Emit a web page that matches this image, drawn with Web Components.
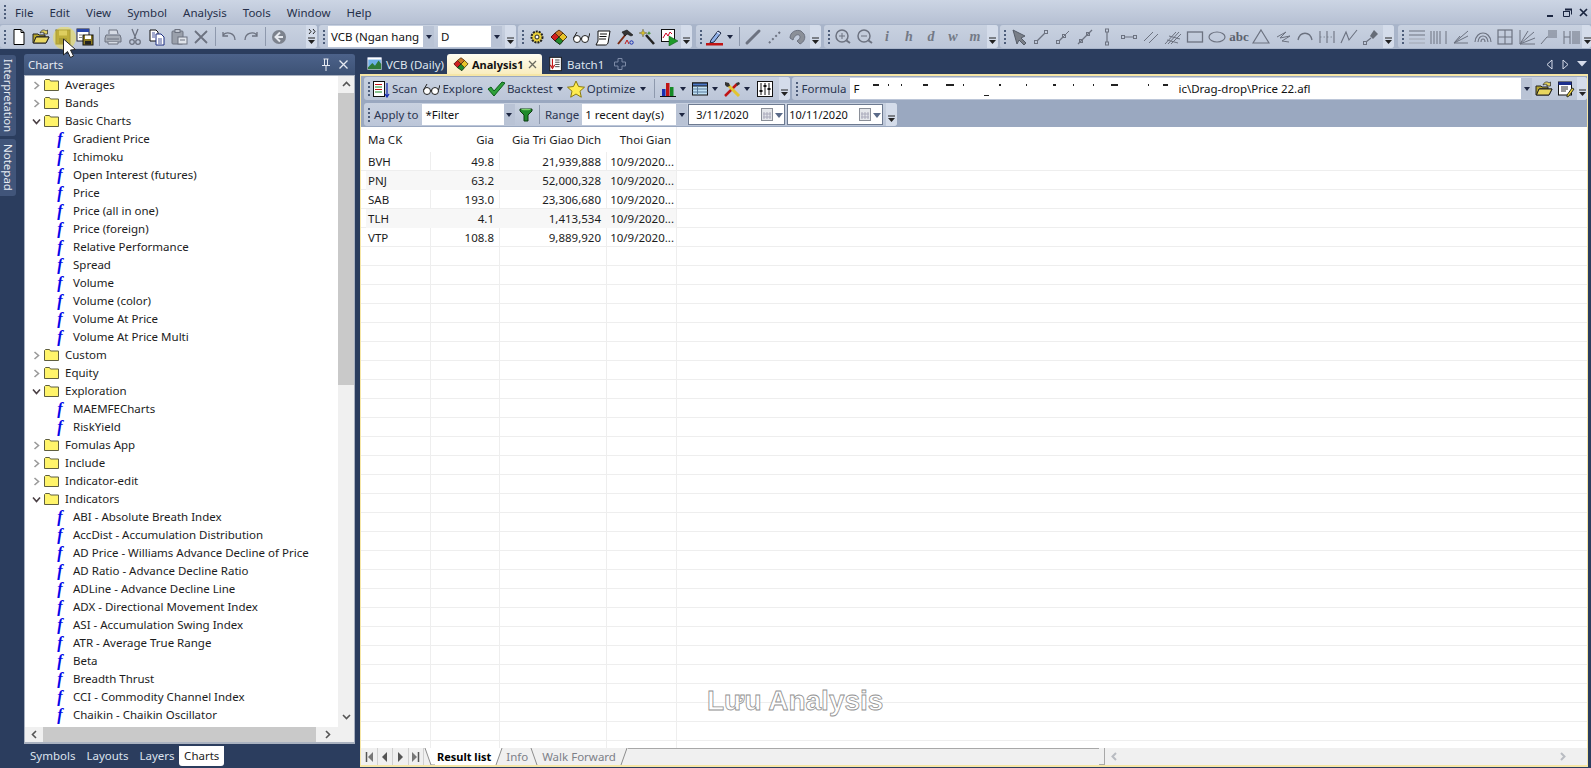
<!doctype html>
<html><head><meta charset="utf-8"><title>AmiBroker</title>
<style>
html,body{margin:0;padding:0;width:1591px;height:768px;overflow:hidden;background:#2b3d5e}
body{font:11.5px "Noto Sans","Open Sans",sans-serif;color:#1c1c1c;position:relative}
</style></head><body>
<am-app>
  <am-menubar>
    <am-menu>File</am-menu><am-menu>Edit</am-menu><am-menu>View</am-menu><am-menu>Symbol</am-menu><am-menu>Analysis</am-menu><am-menu>Tools</am-menu><am-menu>Window</am-menu><am-menu>Help</am-menu>
  </am-menubar>
  <am-toolrow>
    <am-toolbar more style="width:317px">
      <am-btn icon="new"></am-btn><am-btn icon="open"></am-btn><am-btn icon="save"></am-btn><am-btn icon="saveall"></am-btn><am-sep></am-sep>
      <am-btn icon="print"></am-btn><am-btn icon="cut"></am-btn><am-btn icon="copy"></am-btn><am-btn icon="paste"></am-btn><am-btn icon="del"></am-btn><am-sep></am-sep>
      <am-btn icon="undo"></am-btn><am-btn icon="redo"></am-btn><am-sep></am-sep><am-btn icon="back"></am-btn>
    </am-toolbar>
    <am-toolbar style="width:197px">
      <am-combo style="width:106px;margin-left:1px">VCB (Ngan hang</am-combo><am-combo style="width:64px;margin-left:4px">D</am-combo>
    </am-toolbar>
    <am-toolbar style="width:174px">
      <am-btn icon="gear"></am-btn><am-btn icon="gems"></am-btn><am-btn icon="glasses"></am-btn><am-btn icon="script"></am-btn><am-btn icon="hammer"></am-btn><am-btn icon="wand"></am-btn><am-btn icon="play"></am-btn>
    </am-toolbar>
    <am-toolbar style="width:125px;margin-left:2px">
      <am-btn icon="pen" arrow></am-btn><am-sep></am-sep><am-btn icon="line"></am-btn><am-btn icon="dots"></am-btn><am-btn icon="magnet"></am-btn>
    </am-toolbar>
    <am-toolbar style="width:174px;margin-left:1px">
      <am-btn icon="zin"></am-btn><am-btn icon="zout"></am-btn><am-btn letter>i</am-btn><am-btn letter>h</am-btn><am-btn letter>d</am-btn><am-btn letter>w</am-btn><am-btn letter>m</am-btn>
    </am-toolbar>
    <am-toolbar style="width:394px">
      <am-btn icon="arrowtool"></am-btn><am-btn icon="seg"></am-btn><am-btn icon="ray"></am-btn><am-btn icon="xline"></am-btn><am-btn icon="vert"></am-btn><am-btn icon="horiz"></am-btn><am-btn icon="par"></am-btn><am-btn icon="andrews"></am-btn><am-btn icon="rect"></am-btn><am-btn icon="oval"></am-btn><am-btn abc>abc</am-btn><am-btn icon="tri"></am-btn><am-btn icon="zig"></am-btn><am-btn icon="arc"></am-btn><am-btn icon="cycles"></am-btn><am-btn icon="poly"></am-btn><am-btn icon="pin"></am-btn>
    </am-toolbar>
    <am-toolbar style="width:193px;margin-left:2px">
      <am-btn icon="fibh"></am-btn><am-btn icon="fibt"></am-btn><am-btn icon="fan"></am-btn><am-btn icon="fibarc"></am-btn><am-btn icon="gannsq"></am-btn><am-btn icon="gannfan"></am-btn><am-btn icon="gannlv"></am-btn><am-btn icon="cyc2"></am-btn>
    </am-toolbar>
  </am-toolrow>
  <am-workspace>
    <am-sidetabs><am-vtab style="height:81px;font-size:11px">Interpretation</am-vtab><am-vtab style="height:57px">Notepad</am-vtab></am-sidetabs>
    <am-dock title="Charts">
      <am-tree>
        <am-node kind="closed">Averages</am-node><am-node kind="closed">Bands</am-node><am-node kind="open">Basic Charts</am-node>
        <am-node>Gradient Price</am-node><am-node>Ichimoku</am-node><am-node>Open Interest (futures)</am-node><am-node>Price</am-node><am-node>Price (all in one)</am-node><am-node>Price (foreign)</am-node><am-node>Relative Performance</am-node><am-node>Spread</am-node><am-node>Volume</am-node><am-node>Volume (color)</am-node><am-node>Volume At Price</am-node><am-node>Volume At Price Multi</am-node>
        <am-node kind="closed">Custom</am-node><am-node kind="closed">Equity</am-node><am-node kind="open">Exploration</am-node>
        <am-node>MAEMFECharts</am-node><am-node>RiskYield</am-node>
        <am-node kind="closed">Fomulas App</am-node><am-node kind="closed">Include</am-node><am-node kind="closed">Indicator-edit</am-node><am-node kind="open">Indicators</am-node>
        <am-node>ABI - Absolute Breath Index</am-node><am-node>AccDist - Accumulation Distribution</am-node><am-node>AD Price - Williams Advance Decline of Price</am-node><am-node>AD Ratio - Advance Decline Ratio</am-node><am-node>ADLine - Advance Decline Line</am-node><am-node>ADX - Directional Movement Index</am-node><am-node>ASI - Accumulation Swing Index</am-node><am-node>ATR - Average True Range</am-node><am-node>Beta</am-node><am-node>Breadth Thrust</am-node><am-node>CCI - Commodity Channel Index</am-node><am-node>Chaikin - Chaikin Oscillator</am-node>
      </am-tree>
      <am-docktab slot="tabs">Symbols</am-docktab><am-docktab slot="tabs">Layouts</am-docktab><am-docktab slot="tabs">Layers</am-docktab><am-docktab slot="tabs" active>Charts</am-docktab>
    </am-dock>
    <am-doc>
      <am-doctab slot="tabs" icon="chartthumb" style="width:84px">VCB (Daily)</am-doctab>
      <am-doctab slot="tabs" icon="gems" active close style="width:95px">Analysis1</am-doctab>
      <am-doctab slot="tabs" icon="batch" style="width:66px">Batch1</am-doctab>
      <am-toolrow2 slot="bars">
        <am-toolbar style="width:425.5px">
          <am-btn icon="scanlist" auto>Scan</am-btn><am-btn icon="glasses" auto style="margin-left:5px">Explore</am-btn><am-btn icon="check" auto arrow style="margin-left:4px">Backtest</am-btn><am-btn icon="star" auto arrow style="margin-left:4px">Optimize</am-btn><am-sep style="margin-left:8px"></am-sep>
          <am-btn icon="bars" arrow></am-btn><am-btn icon="table" arrow></am-btn><am-btn icon="tools" arrow></am-btn><am-btn icon="mixer" style="margin-left:1px"></am-btn>
        </am-toolbar>
        <am-toolbar style="flex:1;margin-left:2px">
          <am-text>Formula</am-text>
          <am-combo style="width:682px;margin-left:2px"><span style="display:inline-flex;align-items:center">F<svg width="319" height="20"><g fill="#222"><rect x="14" y="5" width="6" height="2"/><rect x="29" y="5" width="1" height="2"/><rect x="42" y="5" width="1" height="2"/><rect x="64" y="5" width="5" height="2"/><rect x="87" y="5" width="8" height="2"/><rect x="104" y="5" width="1" height="2"/><rect x="125" y="16" width="5" height="1"/><rect x="140" y="5" width="2" height="2"/><rect x="167" y="5" width="1" height="2"/><rect x="194" y="5" width="3" height="2"/><rect x="214" y="5" width="1" height="2"/><rect x="234" y="5" width="1" height="2"/><rect x="252" y="5" width="7" height="2"/><rect x="289" y="5" width="1" height="2"/><rect x="304" y="5" width="5" height="2"/></g></svg>ic\Drag-drop\Price 22.afl</span></am-combo>
          <am-btn icon="open" style="margin-left:1px"></am-btn><am-btn icon="editor"></am-btn>
        </am-toolbar>
      </am-toolrow2>
      <am-toolrow2 slot="bars" style="margin-top:1px">
        <am-toolbar style="width:533px">
          <am-text>Apply to</am-text>
          <am-combo style="width:92.5px;margin-left:2px">*Filter</am-combo>
          <am-btn icon="funnel"></am-btn><am-sep></am-sep>
          <am-text>Range</am-text>
          <am-combo style="width:105px;margin-left:1px">1 recent day(s)</am-combo>
          <am-date style="width:97px;margin-left:1px">3/11/2020</am-date>
          <am-date style="width:96px;margin-left:2px" tight>10/11/2020</am-date>
        </am-toolbar>
      </am-toolrow2>
      <am-grid slot="grid">
        <am-row head><am-cell>Ma CK</am-cell><am-cell right>Gia</am-cell><am-cell right>Gia Tri Giao Dich</am-cell><am-cell right>Thoi Gian</am-cell></am-row>
        <am-row><am-cell>BVH</am-cell><am-cell right>49.8</am-cell><am-cell right>21,939,888</am-cell><am-cell right date>10/9/2020...</am-cell></am-row>
        <am-row alt><am-cell>PNJ</am-cell><am-cell right>63.2</am-cell><am-cell right>52,000,328</am-cell><am-cell right date>10/9/2020...</am-cell></am-row>
        <am-row><am-cell>SAB</am-cell><am-cell right>193.0</am-cell><am-cell right>23,306,680</am-cell><am-cell right date>10/9/2020...</am-cell></am-row>
        <am-row alt><am-cell>TLH</am-cell><am-cell right>4.1</am-cell><am-cell right>1,413,534</am-cell><am-cell right date>10/9/2020...</am-cell></am-row>
        <am-row><am-cell>VTP</am-cell><am-cell right>108.8</am-cell><am-cell right>9,889,920</am-cell><am-cell right date>10/9/2020...</am-cell></am-row>
        <am-watermark slot="over">Lưu Analysis</am-watermark>
      </am-grid>
      <am-sheets slot="sheets"></am-sheets>
    </am-doc>
  </am-workspace>
  <am-pointer></am-pointer>
</am-app>
<script>
const G='#6c7280',B='#000';
const s=(d,c=G,w=1.2)=>`<path d="${d}" fill="none" stroke="${c}" stroke-width="${w}"/>`;
const box=(x,y)=>`<rect x="${x-1.5}" y="${y-1.5}" width="3" height="3" fill="none" stroke="${G}"/>`;
const ICONS={
new:`<path d="M4 1.500h7l3 3v12H4z" fill="#fff" stroke="#000"/><path d="M11 1.500v3h3" fill="none" stroke="#000"/>`,
open:`<path d="M1 15V6h5l1 1h6v2H5L2 15l2-6h13l-3 6z" fill="#b5a52c" stroke="#222"/><path d="M1.500 15 4 9h13l-3 6z" fill="#e8d660" stroke="#222"/><path d="M8 5C9 2 12 1 14 3l1.500-1v4h-4l1-1C12 4 10 4 8 5z" fill="#e8d660" stroke="#222" stroke-width=".7"/>`,
save:`<rect x="2" y="2" width="14" height="14" fill="#85741f" stroke="#5a4f18"/><rect x="5" y="2.500" width="8" height="5" fill="#c9bb72"/><rect x="5" y="10" width="8" height="5.500" fill="#5a4f18"/>`,
saveall:`<rect x="1" y="1" width="12" height="12" fill="#fff" stroke="#223"/><rect x="1" y="1" width="12" height="3" fill="#2a46a8"/><path d="M3 7h3M3 9.500h3" stroke="#888"/><rect x="7" y="7" width="10" height="10" fill="#8c7a20" stroke="#111"/><rect x="9" y="7.500" width="6" height="3.500" fill="#fff"/><rect x="9" y="13" width="6" height="3.500" fill="#222"/>`,
print:`<path d="M5 6V2h8l1 4" fill="#d6dbe4" stroke="${G}"/><path d="M2 7h14l1 3v4H1v-4z" fill="#a8aeb8" stroke="${G}"/><path d="M3 11h12M4 14v2h10v-2" stroke="${G}" fill="#d6dbe4"/>`,
cut:s('M6 1l4 10M12 1L8 11',G,1.3)+`<circle cx="6" cy="14" r="2.300" fill="none" stroke="${G}" stroke-width="1.300"/><circle cx="12" cy="14" r="2.300" fill="none" stroke="${G}" stroke-width="1.300"/>`,
copy:`<path d="M2 2h6l2 2v9H2z" fill="#fff" stroke="#111"/><path d="M8 6h5l3 3v8H8z" fill="#fff" stroke="#1b2c80"/><path d="M4 5h3M4 7h3M4 9h3M10 11h4M10 13h4M10 15h4" stroke="#1b2c80" stroke-width=".8"/>`,
paste:`<rect x="2" y="3" width="11" height="13" rx="1" fill="#9aa0ab" stroke="${G}"/><rect x="5" y="1.500" width="5" height="3" fill="#c3c8d2" stroke="${G}"/><rect x="8" y="9" width="9" height="7" fill="#dfe3ea" stroke="${G}"/><path d="M10 12h5" stroke="${G}"/>`,
del:s('M3 3l12 12M15 3L3 15',G,1.800),
undo:s('M3 7c4-4 12-2 12 5M3 4v4h5',G,1.300),
redo:s('M15 7c-4-4-12-2-12 5M15 4v4h-5',G,1.300),
back:`<circle cx="9" cy="9" r="7" fill="#7c828d"/><path d="M10 4.500 5.500 9l4.500 4.500M6 9h7" fill="none" stroke="#e6e9ef" stroke-width="2"/>`,
gear:`<circle cx="9" cy="9" r="5.500" fill="#e8cf3c" stroke="#222" stroke-dasharray="2 1" stroke-width="2"/><circle cx="9" cy="9" r="2" fill="#fff" stroke="#222"/>`,
gems:`<path d="M1 9l4-4 4 4-4 4z" fill="#cf1f1f" stroke="#511"/><path d="M5 13l4-4 4 4-3 3.500z" fill="#22882c" stroke="#131"/><path d="M9 9l4-4 4 4-4 4z" fill="#e8c52a" stroke="#541"/><path d="M5 5l4-3 4 3-4 4z" fill="#d07a24" stroke="#531"/>`,
glasses:`<circle cx="5" cy="11" r="3.500" fill="#fff" stroke="#222"/><circle cx="13" cy="11" r="3.500" fill="#fff" stroke="#222"/><path d="M8.500 10.500c1-.8 1.500-.8 1 0M1.500 10 5 4M16.500 10 18 5" stroke="#222" fill="none"/>`,
script:`<path d="M4 3h12l-2 12c-1 2-2 2-3 2H2l2-4z" fill="#fff" stroke="#111"/><path d="M6 6h7M5.500 8.500h7M5 11h7" stroke="#111"/>`,
hammer:`<path d="M2 16 10 6" stroke="#7a2a12" stroke-width="2"/><path d="M6 4l5-2 6 5-2 1-4-2-2 2z" fill="#333" stroke="#111" stroke-width=".6"/><path d="M9 16l2-4 2 4" fill="none" stroke="#c01818"/><circle cx="15.500" cy="14.500" r="1.700" fill="none" stroke="#1a2fb0"/>`,
wand:`<path d="M8 7 16 16" stroke="#222" stroke-width="2.500"/><path d="M5 1l1 3 3 1-3 1-1 3-1-3-3-1 3-1z" fill="#d6be2a" stroke="#665" stroke-width=".5"/><path d="M11 3l.6 1.600 1.600.6-1.600.6-.6 1.600-.6-1.600-1.600-.6 1.600-.6z" fill="#3a8a2a"/>`,
play:`<rect x="1.500" y="1.500" width="13" height="12" fill="#fff" stroke="#111"/><path d="M3 10l3-5 2 3 2-4 2 2" stroke="#c02" fill="none"/><path d="M9 8l9 5-9 5z" fill="#1f9a2a" stroke="#0a5012" stroke-width=".5"/>`,
pen:`<path d="M5 12 12 3l3 2-7 9-4 1z" fill="#8fb0e8" stroke="#1a2540"/><path d="M11 4l3 2" stroke="#eef"/><rect x="0" y="15" width="17" height="2.500" fill="#c01414"/>`,
line:`<path d="M3 15 15 3" stroke="${G}" stroke-width="3" stroke-linecap="round"/>`,
dots:`<path d="M3 15 15 3" stroke="${G}" stroke-width="2" stroke-dasharray="2 2.500"/>`,
magnet:`<path d="M2 10C2 4 8 1 13 3l3 3c2 4 0 8-4 10l-3-3c3-2 4-4 2-6-2-1-5 1-6 5z" fill="#8a8f98" stroke="${G}"/>`,
zin:`<circle cx="8" cy="8" r="6" fill="#c3ccdb" stroke="${G}" stroke-width="1.500"/><path d="M5 8h6M8 5v6" stroke="${G}"/><path d="M12.500 12.500 16 15" stroke="${G}" stroke-width="2"/>`,
zout:`<circle cx="8" cy="8" r="6" fill="#c3ccdb" stroke="${G}" stroke-width="1.500"/><path d="M5 8h6" stroke="${G}"/><path d="M12.500 12.500 16 15" stroke="${G}" stroke-width="2"/>`,
arrowtool:`<path d="M3 2l12 6-4 2 5 5-2 2-5-5-2 4z" fill="#7a7f88" stroke="#555c68"/>`,
seg:s('M5 13 13 5')+box(4,14)+box(14,4),
ray:s('M5 13 9 9')+s('M9 9l6-6',G,1)+box(4,14)+box(10,8),
xline:s('M2 16 16 2')+box(5,13)+box(12,6),
vert:s('M9 4v10')+box(9,2.500)+box(9,15.500),
horiz:s('M5 9h8')+box(3,9)+box(15,9),
par:s('M2 13 11 4M7 15 16 6',G,1),
andrews:s('M1 16 12 4M4 16 15 4M7 16 17 6M5 8l11 3M3 12l11 3',G,1),
rect:`<rect x="1.500" y="4" width="15" height="10" fill="none" stroke="${G}" stroke-width="1.300"/>`,
oval:`<ellipse cx="9" cy="9" rx="8" ry="5" fill="none" stroke="${G}" stroke-width="1.200"/>`,
tri:s('M9 2 17 15H1z',G,1.200),
zig:s('M3 9l9-5-6 6 10-2-8 5 7 1',G,1),
arc:s('M2 12C4 3 14 3 16 12',G,1.300),
cycles:s('M2 3v12M9 3v12M16 3v12',G,1.100)+s('M2 9h14',G,.7).replace('/>',' stroke-dasharray="1.500 2"/>'),
poly:s('M1 15 6 4l3 8 8-10',G,1.100),
pin:`<path d="M12 2l4 4-5 5-3-3z" fill="#666c77"/>`+s('M9 10 4 14')+box(3,15),
fibh:s('M1 3h16M1 7h16',G,1)+`<path d="M1 11h16M1 15h16" stroke="#a0a6b2"/>`,
fibt:s('M1 3v13M4 3v13M7 3v13M10 3v13M16 3v13',G,1),
fan:s('M2 15 16 3M2 15 16 8M2 15h14',G,1)+s('M2 15 8 8',G,1),
fibarc:s('M1 14C2 2 16 2 17 14M4 14C5 6 13 6 14 14M7 14C7 10 11 10 11 14',G,1.100),
gannsq:`<rect x="2" y="2" width="14" height="14" fill="none" stroke="${G}" stroke-width="1.200"/>`+s('M9 2v14M2 9h14',G,1.100),
gannfan:s('M2 2v14h15M2 16 16 4M2 16 10 3M2 16 17 10',G,1),
gannlv:s('M1 16 7 9M7 9h10M8 7h9M8 5h9M8 3h9',G,1),
cyc2:s('M2 3v13M2 9h6M8 3v13M11 3v13M13 3v13M15 3v13M17 3v13',G,1),
scanlist:`<rect x="1.500" y="1.500" width="11" height="15" fill="#fff" stroke="#111"/><path d="M3 4.500h7" stroke="#c01414"/><path d="M3 7h7" stroke="#158a26"/><path d="M3 9.500h7" stroke="#c01414"/><path d="M3 12h7" stroke="#158a26"/><path d="M15 3v13M13 14l2 3 2-3" stroke="#1a2fb0" fill="none" stroke-width="1.300"/>`,
check:`<path d="M1 9l3-2 3 4 8-9 3 1-11 13z" fill="#2fa03a" stroke="#0d5c1a"/>`,
star:`<path d="M9 1l2.500 5.500 6 .7-4.500 4 1.300 6L9 14l-5.300 3.200 1.300-6-4.500-4 6-.7z" fill="#ffec50" stroke="#8a7a10"/>`,
bars:`<rect x="3" y="9" width="3.500" height="7" fill="#1a2fb0"/><rect x="7" y="3" width="3.500" height="13" fill="#c01414"/><rect x="11" y="7" width="3.500" height="9" fill="#158a26"/><path d="M1 16.500h16" stroke="#111"/>`,
table:`<rect x="1.500" y="3" width="15" height="12" fill="#bfe0f4" stroke="#111"/><rect x="1.500" y="3" width="15" height="3" fill="#4a78c8" stroke="#111"/><path d="M6.500 6v9M1.500 9h15M1.500 12h15" stroke="#5a7a9a"/>`,
tools:`<path d="M2 16 14 4" stroke="#c01414" stroke-width="2.500"/><path d="M16 16 5 5" stroke="#e2c530" stroke-width="3"/><path d="M2 2l4 1 1 3-3 1-2-2zM13 3l3-1 1 2-3 2z" fill="#333"/>`,
mixer:`<rect x="1.500" y="1.500" width="15" height="15" fill="#fff" stroke="#111"/><path d="M5 3v12M9 3v12M13 3v12" stroke="#111"/><rect x="3.500" y="10" width="3" height="2" fill="#111"/><rect x="7.500" y="5" width="3" height="2" fill="#111"/><rect x="11.500" y="8" width="3" height="2" fill="#111"/>`,
editor:`<rect x="1.500" y="2" width="13" height="13" fill="#fff" stroke="#111"/><rect x="1.500" y="2" width="13" height="3" fill="#1c2f8c"/><path d="M4 7h7M4 9h7M4 11h5" stroke="#333"/><path d="M10 15l5-7 2 1-5 7-2 1z" fill="#e8cf3c" stroke="#332"/>`,
funnel:`<path d="M3 3h12v2l-4 4v6H7V9L3 5z" fill="#1f8a2a" stroke="#0b3a10"/><ellipse cx="9" cy="3.500" rx="5" ry=".8" fill="#7ad06a"/>`,
chartthumb:`<rect x="1" y="2" width="15" height="13" fill="#6fb0e8" stroke="#dde"/><path d="M1 13l5-5 3 3 4-6 3 4v6H1z" fill="#2e7a3a"/><rect x="1" y="2" width="15" height="2" fill="#fff"/>`,
batch:`<rect x="2" y="1.500" width="13" height="15" fill="#fff" stroke="#111"/><path d="M8 4.500h5M8 7h5M8 9.500h5M8 12h5" stroke="#333"/><path d="M5 3v9M2.500 10 5 14l2.500-4" stroke="#c01414" fill="none" stroke-width="1.300"/>`,
};
function def(name,css,html){
  customElements.define(name,class extends HTMLElement{
    constructor(){super();this.attachShadow({mode:'open'});}
    connectedCallback(){ if(!this._i){this._i=1;this.shadowRoot.innerHTML=`<style>${css}</style>${typeof html==='function'?html(this):html}`;} }
  });
}
const chev=(d,c,w=1.600)=>`<svg width="9" height="9" viewBox="0 0 9 9"><path d="${d}" fill="none" stroke="${c}" stroke-width="${w}"/></svg>`;
const grip=`<svg width="2" height="16" style="flex:none"><path d="M1 1v14" stroke="#4d5d7a" stroke-width="2" stroke-dasharray="2 2"/></svg>`;
const expander=`<svg width="7" height="8" viewBox="0 0 7 8"><path d="M0 1h7" stroke="#222"/><path d="M0 3h7L3.500 7z" fill="#222"/></svg>`;
const more=`<svg width="8" height="5" style="position:absolute;top:4px;left:2px"><path d="M1 0l2 2.500L1 5M5 0l2 2.500L5 5" fill="none" stroke="#222"/></svg>`;

def('am-app',':host{display:flex;flex-direction:column;width:1591px;height:768px;position:relative;overflow:hidden}','<slot></slot>');
def('am-menubar',`:host{display:flex;align-items:center;height:24px;flex:none;padding-left:4px;background:linear-gradient(#ccd5e4,#b6c0d3);color:#26304a}
 .w{margin-left:auto;display:flex;gap:5px;align-items:center;padding-right:2px} .items{display:flex;margin-left:1px}`,
 `${grip}<div class="items"><slot></slot></div><div class="w"><svg width="11" height="11"><rect x="1" y="8" width="6" height="2" fill="#1a2540"/></svg><svg width="11" height="11"><path d="M3.500 2.500h6v5M1.500 4.500h6v5h-6zM1 4.500h7" fill="none" stroke="#1a2540"/><path d="M3 2.500h7" stroke="#1a2540" stroke-width="2"/></svg><svg width="11" height="11"><path d="M2 2l7 7M9 2l-7 7" stroke="#1a2540" stroke-width="1.700"/></svg></div>`);
def('am-menu',':host{display:block;padding:0 8px;white-space:nowrap}','<slot></slot>');
def('am-toolrow',':host{display:flex;height:25px;flex:none;background:#a9b5ca;gap:2px;align-items:stretch}','<slot></slot>');
def('am-toolrow2',':host{display:flex;height:25px;flex:none;align-items:stretch;padding:0 0 0 3px}','<slot></slot>');
def('am-toolbar',`:host{display:flex;align-items:center;box-sizing:border-box;flex:none;background:linear-gradient(#c8d1e0,#bcc6d8);border-radius:3px;padding-left:3px;overflow:hidden;margin:1px 0;color:#2a3550}
 .g{margin-right:1px;display:flex;width:4px;justify-content:center;flex:none}
 .x{margin-left:auto;width:11px;align-self:stretch;background:#d4dcea;display:flex;align-items:flex-end;justify-content:center;padding-bottom:3px;box-sizing:border-box;flex:none;position:relative}`,
 h=>`<span class="g">${grip}</span><slot></slot><span class="x">${h.hasAttribute('more')?more:''}${expander}</span>`);
def('am-text',':host{display:block;white-space:nowrap;padding:0 2px}','<slot></slot>');
def('am-sep',':host{display:block;width:1px;height:19px;background:#8e99ad;margin:0 2.500px;flex:none}','');
def('am-btn',`:host{display:flex;align-items:center;justify-content:center;height:22px;min-width:22px;flex:none;white-space:nowrap;gap:2px;color:#2a3550}
 :host([arrow]:not([auto])){min-width:32px;box-sizing:border-box;padding-left:2px;justify-content:flex-start}
 :host([letter]){font:italic 700 14px "Liberation Serif",serif;color:#737985}
 :host([abc]){font:700 13px "Liberation Serif",serif;color:#5c626e}
 .a{width:0;height:0;border:3px solid transparent;border-top:4px solid #1c2540;margin:3px 0 0 1px}
 :host([auto]) .a{margin-left:2px}`,
 h=>{const n=h.getAttribute('icon');return (n?`<svg width="18" height="18" viewBox="0 0 18 18" style="flex:none">${ICONS[n]}</svg>`:'')+'<slot></slot>'+(h.hasAttribute('arrow')?'<span class="a"></span>':'');});
def('am-combo',`:host{display:flex;align-items:center;height:21px;background:#fff;flex:none;box-sizing:border-box;padding-left:3px;color:#111;white-space:nowrap}
 .b{margin-left:auto;width:11px;align-self:stretch;background:#b9c3d5;display:flex;align-items:center;justify-content:center;flex:none} .b i{border:3.500px solid transparent;border-top:4px solid #1c2540;margin-top:4px}`,
 `<slot></slot><span class="b"><i></i></span>`);
def('am-date',`:host{display:flex;align-items:center;height:21px;background:#fff;flex:none;box-sizing:border-box;padding-left:7px;border:1px solid #6d7a90;color:#111;white-space:nowrap;font-size:11px}
 :host([tight]){padding-left:1px}
 .c{margin-left:auto;margin-right:1px;display:flex;align-items:center;gap:2px} i{border:4px solid transparent;border-top:5px solid #5a6a88;margin-top:5px}`,
 `<slot></slot><span class="c"><svg width="12" height="13" viewBox="0 0 12 13"><rect x=".5" y=".5" width="11" height="12" fill="#e4e6ea" stroke="#8a8f98"/><path d="M3 4v7M6 4v7M9 4v7M2 6h8M2 9h8" stroke="#aab"/></svg><i></i></span>`);
def('am-workspace',':host{display:flex;height:719px;flex:none;background:#2b3d5e;background-image:radial-gradient(#2f4265 .5px,transparent .6px);background-size:2px 2px}','<slot></slot>');
def('am-sidetabs',':host{display:flex;flex-direction:column;width:24px;flex:none;padding-top:6px;gap:3px;box-sizing:border-box}','<slot></slot>');
def('am-vtab',':host{display:block;width:16px;background:#41557a;border-radius:0 3px 3px 0;color:#e8ecf3;writing-mode:vertical-rl;text-align:center;line-height:15px;white-space:nowrap}','<slot></slot>');
def('am-dock',`:host{display:flex;flex-direction:column;width:331px;flex:none;margin-top:5px;height:713px}
 .t{height:21px;flex:none;background:linear-gradient(#4c628a,#3d5275);border-radius:3px 3px 0 0;color:#e6eaf2;display:flex;align-items:center;padding:0 6px 0 4px}
 .t svg{margin-left:6px} .t b{font-weight:400;margin-right:auto}
 .body{height:669px;flex:none;background:#fff;border:1px solid #aab2c0;border-width:1px 1px 2px 1px;box-sizing:border-box;display:flex;flex-direction:column}
 .main{display:flex;flex:none;height:651px}
 .tree{flex:1;overflow:hidden}
 .v{width:16px;flex:none;display:flex;flex-direction:column;background:#f0f0f0;align-items:center}
 .v .ar{height:17px;flex:none;display:flex;align-items:center;justify-content:center}
 .v .th{height:292px;width:100%;background:#c9c9c9;flex:none}
 .h{height:15px;flex:none;display:flex;background:#f0f0f0;align-items:center}
 .h .ar{width:18px;flex:none;display:flex;align-items:center;justify-content:center}
 .h .th{width:273px;height:100%;background:#c9c9c9;flex:none}
 .tabs{display:flex;margin-top:2px;height:21px;flex:none;padding-left:1.500px}`,
 h=>`<div class="t"><b>${h.getAttribute('title')}</b><svg width="10" height="14"><path d="M2.500 1h5M3.500 1v6M6.500 1v6M1 7.500h8M5 8v5" stroke="#e6eaf2" fill="none"/></svg><svg width="11" height="11" style="margin-left:7px"><path d="M1.500 1.500l8 8M9.500 1.500l-8 8" stroke="#e6eaf2" stroke-width="1.300"/></svg></div>
 <div class="body"><div class="main"><div class="tree"><slot></slot></div><div class="v"><div class="ar">${chev('M1 6l3.500-3.500L8 6','#555')}</div><div class="th"></div><div style="flex:1"></div><div class="ar" style="margin-bottom:2px">${chev('M1 3l3.500 3.500L8 3','#555')}</div></div></div>
 <div class="h"><div class="ar">${chev('M6 1L2.500 4.500 6 8','#555')}</div><div class="th"></div><div style="flex:1"></div><div class="ar" style="margin-right:16px;width:22px">${chev('M3 1l3.500 3.500L3 8','#555')}</div></div></div>
 <div class="tabs"><slot name="tabs"></slot></div>`);
def('am-docktab',`:host{display:block;height:20px;line-height:19px;padding:0 4.500px;color:#dde3ee;margin-right:2px;white-space:nowrap}
 :host([active]){background:#fff;color:#222;border-radius:0 0 3px 3px;margin-left:-2px;padding:0 5px}`,'<slot></slot>');
def('am-tree',':host{display:block}','<slot></slot>');
const folder=`<svg width="16" height="14" viewBox="0 0 16 14" style="flex:none"><path d="M.5 12.500V2.500l1-1h4l1 1.500h8v9.500z" fill="#fff46a" stroke="#5f5f40"/></svg>`;
def('am-node',`:host{display:flex;align-items:center;height:18px;white-space:nowrap;color:#1c1c1c}
 .c{width:16px;margin-left:3px;display:flex;justify-content:center;flex:none}
 .l{margin-left:5px;position:relative;top:-1px}.t{position:relative;top:-1px}
 .f{font:italic 700 16px/18px "Liberation Serif",serif;color:#0505e8;margin-left:27px;width:16px;margin-right:5px;text-align:center;flex:none}`,
 h=>{const k=h.getAttribute('kind');
  if(k==='closed')return `<span class="c">${chev('M2.500 1 6.500 4.500 2.500 8','#9a9a9a')}</span>${folder}<span class="l"><slot></slot></span>`;
  if(k==='open')return `<span class="c">${chev('M1 2.500 4.500 6.500 8 2.500','#4a3f44')}</span>${folder}<span class="l"><slot></slot></span>`;
  return `<span class="f">f</span><span class="t"><slot></slot></span>`;});
def('am-doc',`:host{display:flex;flex-direction:column;width:1228px;flex:none;margin-left:5px;margin-top:5px;height:713px}
 .tabs{height:20px;flex:none;display:flex;padding-left:3px;align-items:stretch;color:#e6eaf2}
 .nav{margin-left:auto;display:flex;align-items:center;gap:7px;padding-right:1px}
 .frame{flex:1;display:flex;flex-direction:column;border:solid #f6e6a6;border-width:2px 1px 2px 1px;min-height:0}
 .bars{height:51px;flex:none;background:#9aa8c0}
 .plus{display:flex;align-items:center;margin-left:4px}`,
 `<div class="tabs"><slot name="tabs"></slot><span class="plus"><svg width="12" height="12"><path d="M4 .5h4V4h3.500v4H8v3.500H4V8H.5V4H4z" fill="none" stroke="#7c8aa6"/></svg></span><span class="nav"><svg width="9" height="11"><path d="M7 1 2 5.500 7 10z" fill="none" stroke="#d6dcea"/></svg><svg width="9" height="11"><path d="M2 1l5 4.500L2 10z" fill="none" stroke="#d6dcea"/></svg><svg width="10" height="6"><path d="M0 0h10L5 5.500z" fill="#d6dcea"/></svg></span></div>
 <div class="frame"><div class="bars"><slot name="bars"></slot></div><slot name="grid"></slot><slot name="sheets"></slot></div>`);
def('am-doctab',`:host{display:flex;align-items:center;box-sizing:border-box;padding-left:4px;white-space:nowrap;flex:none;gap:3px;color:#dfe5ef}
 :host([active]){background:linear-gradient(#fffdf2,#f9edbf);border-radius:3px 3px 0 0;color:#111;font-weight:700;font-size:11px;padding-left:6px;margin-right:2px}
 .x{margin-left:auto;margin-right:5px}`,
 h=>`<svg width="16" height="16" viewBox="0 0 18 18" style="flex:none">${ICONS[h.getAttribute('icon')]}</svg><slot></slot>`+(h.hasAttribute('close')?`<svg class="x" width="9" height="9"><path d="M1 1l7 7M8 1L1 8" stroke="#6a6a60" stroke-width="1.300"/></svg>`:''));
def('am-grid',`:host{display:block;flex:1;position:relative;overflow:hidden;min-height:0;background-color:#fff;
 background-image:linear-gradient(#eee,#eee),linear-gradient(#eee,#eee),linear-gradient(#eee,#eee),linear-gradient(#eee,#eee),repeating-linear-gradient(to bottom,transparent 0 18px,#eee 18px 19px);
 background-size:1px 100%,1px 100%,1px 100%,1px 100%,100% calc(100% - 25px);background-position:69px 0,138px 0,245px 0,315px 0,0 25px;background-repeat:no-repeat;padding-left:5px}`,
 '<slot></slot><slot name="over"></slot>');
def('am-row',`:host{display:flex;height:19px;width:310px;color:#1c1c1c}
 :host([head]){height:25px;box-sizing:border-box;background:#fff}:host([alt]){background:#f7f7f7}`,'<slot></slot>');
def('am-cell',`:host{display:flex;align-items:center;box-sizing:border-box;white-space:nowrap;padding:0 5px 1px 2px;flex:none}
 :host(:nth-child(1)){width:64px}:host(:nth-child(2)){width:69px}:host(:nth-child(3)){width:107px}:host(:nth-child(4)){width:70px}
 :host([right]){justify-content:flex-end}:host([date]){padding-right:2px}`,'<slot></slot>');
def('am-watermark',`:host{position:absolute;left:346px;top:554px;font:700 28px/40px "Liberation Sans",sans-serif;color:#fff;-webkit-text-stroke:.8px #909090;white-space:nowrap}`,'<slot></slot>');
def('am-sheets',`:host{display:flex;height:17px;flex:none;background:#f0f0f0;align-items:stretch;color:#7d8088;position:relative}
 .nav{display:flex;margin-left:1px;flex:none} .nav span{width:15.500px;border:1px solid #d0d0d0;border-width:0 1px 0 0;box-sizing:border-box;display:flex;align-items:center;justify-content:center}
 .t{padding:0 2px;display:flex;align-items:center;white-space:nowrap;flex:none}
 .t.a{background:#fff;color:#000;font-weight:700;font-size:11px}
 svg{flex:none;display:block}
 .line{width:471px;border-top:1px solid #a8a8a8;flex:none}
 .sp{width:6px;background:#f0f0f0;border:solid #a8a8a8;border-width:0 1px 1px 0;box-sizing:border-box;flex:none}
 .sc{flex:1;display:flex;align-items:center;justify-content:space-between;padding:0 20px 0 5px}`,
 `<div class="nav"><span><svg width="9" height="10"><path d="M1.500 0v10" stroke="#555" stroke-width="1.500"/><path d="M8 0v10L3 5z" fill="#777"/></svg></span><span><svg width="9" height="10"><path d="M7 0v10L2 5z" fill="#555"/></svg></span><span><svg width="9" height="10"><path d="M2 0v10l5-5z" fill="#555"/></svg></span><span><svg width="9" height="10"><path d="M7.500 0v10" stroke="#555" stroke-width="1.500"/><path d="M1 0v10l5-5z" fill="#777"/></svg></span></div>
 <svg width="11" height="17"><path d="M1 0 11 17H11V0z" fill="#fff"/><path d="M1 0l6 17h4" fill="#fff" stroke="#8c8c8c"/></svg>
 <div class="t a">Result list</div>
 <svg width="11" height="17"><path d="M0 0h9L3 17H0z" fill="#fff"/><path d="M9 0 3 17" stroke="#8c8c8c" fill="none"/></svg>
 <div class="t">Info</div>
 <svg width="10" height="17"><path d="M1 0l6 17" stroke="#8c8c8c" fill="none"/></svg>
 <div class="t">Walk Forward</div>
 <svg width="10" height="17"><path d="M9 0 3 17" stroke="#8c8c8c" fill="none"/></svg>
 <div class="line"></div><div class="sp"></div>
 <div class="sc">${chev('M6 1 2.500 4.500 6 8','#b9bcc2',2)}${chev('M3 1l3.500 3.500L3 8','#b9bcc2',2)}</div>`);
def('am-pointer',`:host{position:absolute;left:53px;top:27px;width:26px;height:32px;pointer-events:none}`,
 `<svg width="26" height="32"><circle cx="11.500" cy="11" r="11.500" fill="#efdf50" fill-opacity=".55"/><path d="M10.500 12v16l4-3.500 3 6 3-1.500-3-6 5-.5z" fill="#fff" stroke="#222" stroke-width="1"/></svg>`);
</script>
</body></html>
